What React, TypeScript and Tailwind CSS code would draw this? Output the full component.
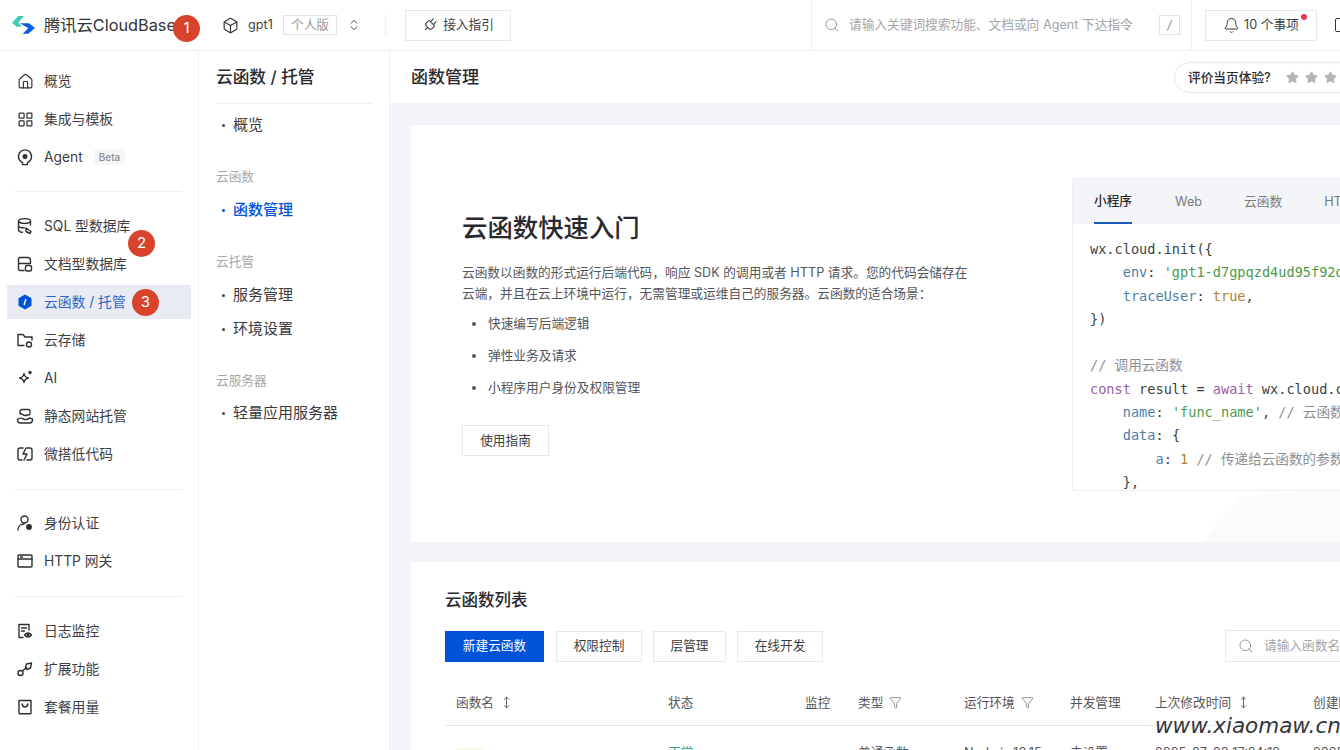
import { Bell, ChevronsUpDown, Box, House, LayoutGrid, Plug, Search, Star, Funnel, MoveVertical } from "lucide-react";
import type { ReactNode } from "react";

const Ico = ({ children }: { children: ReactNode }) => (
  <svg width="18" height="18" viewBox="0 0 18 18" fill="none" stroke="#2f2f33" strokeWidth="1.4" strokeLinecap="round" strokeLinejoin="round">
    {children}
  </svg>
);

const icons: Record<string, ReactNode> = {
  home: <House size={17} strokeWidth={1.6} color="#2f2f33" />,
  grid: <LayoutGrid size={17} strokeWidth={1.7} color="#2f2f33" />,
  agent: (
    <Ico>
      <path d="M6.500 14.600a6.600 6.600 0 1 1 5 0" />
      <path d="M6.500 14.600v2h5v-2" />
      <circle cx="9" cy="8.500" r="1.800" fill="#2f2f33" />
    </Ico>
  ),
  sql: (
    <Ico>
      <ellipse cx="8.500" cy="4" rx="6" ry="2.400" />
      <path d="M2.500 4v9c0 1.200 1.800 2.100 4 2.300M14.500 4v4M2.500 8.500c0 1.300 2.400 2.400 6 2.400" />
      <path d="M10 11l5 3.500-1 2-4-2z" />
    </Ico>
  ),
  doc: (
    <Ico>
      <path d="M8 15.500H4.500a2 2 0 0 1-2-2v-9a2 2 0 0 1 2-2h7a3 3 0 0 1 3 3V8M2.500 8.500h12" />
      <rect x="9.500" y="10.500" width="6" height="5.500" rx="1.500" />
    </Ico>
  ),
  fn: (
    <svg width="18" height="18" viewBox="0 0 18 18">
      <path d="M9 1.500l6.500 3.700v7.600L9 16.500l-6.500-3.700V5.200z" fill="#0052d9" />
      <path d="M9.800 6.500L8.200 11.500" stroke="#fff" strokeWidth="1.400" strokeLinecap="round" />
    </svg>
  ),
  folder: (
    <Ico>
      <path d="M8 14.500H2V3.500h5l2 2.500h7v3" />
      <circle cx="13" cy="13.500" r="2.500" />
    </Ico>
  ),
  ai: (
    <Ico>
      <path d="M8 4.500c.5 3 1.500 4 4.500 4.500-3 .5-4 1.500-4.500 4.500-.5-3-1.500-4-4.500-4.500 3-.5 4-1.500 4.500-4.500z" />
      <circle cx="14" cy="3.500" r="1" fill="#2f2f33" />
    </Ico>
  ),
  web: (
    <Ico>
      <path d="M4 7V4.500a2 2 0 0 1 2-2h6a2 2 0 0 1 2 2V6M4 7c2-1 3 1.500 5 1.500s3-1 5-1" />
      <path d="M1.500 12.500c2-2.500 4-1.500 6-.5s4 1 6-1l3 1v1a3 3 0 0 1-3 3H4.500a3 3 0 0 1-3-3.500z" />
    </Ico>
  ),
  low: (
    <Ico>
      <path d="M7 3H4a2 2 0 0 0-2 2v8a2 2 0 0 0 2 2h2M11 3h3a2 2 0 0 1 2 2v8a2 2 0 0 1-2 2h-3" />
      <path d="M10 3L7 9h4l-3 6" />
    </Ico>
  ),
  user: (
    <Ico>
      <circle cx="8.500" cy="5.500" r="3.500" />
      <path d="M2 16c0-3.500 2.500-6 6-6" />
      <circle cx="13" cy="13" r="2.200" fill="#2f2f33" />
    </Ico>
  ),
  http: (
    <Ico>
      <rect x="2" y="3" width="14" height="12" rx="1" />
      <path d="M2 7h14M4.500 5h2" />
    </Ico>
  ),
  log: (
    <Ico>
      <path d="M7 15.500H3V2.500h10V8M5.500 6h5M5.500 9h3" />
      <path d="M8.500 13c2-2.600 5-2.600 7 0-2 2.600-5 2.600-7 0z" />
      <circle cx="12" cy="13" r=".8" fill="#2f2f33" />
    </Ico>
  ),
  ext: (
    <Ico>
      <circle cx="4.500" cy="13" r="2.500" />
      <path d="M6.500 11l4-3.500" />
      <path d="M9.500 7.500l1-3.500 5-1-1 5-3.500 1.500z" />
    </Ico>
  ),
  plan: (
    <Ico>
      <path d="M3 2.500h12V15a.8.8 0 0 1-.8.800H3.800A.8.800 0 0 1 3 15z" />
      <path d="M6 6c.5 2 1.500 3 3 3s2.500-1 3-3" />
    </Ico>
  ),
};

type NavItem = { icon: string; label: string; beta?: boolean; active?: boolean };

const navGroups: NavItem[][] = [
  [
    { icon: "home", label: "概览" },
    { icon: "grid", label: "集成与模板" },
    { icon: "agent", label: "Agent", beta: true },
  ],
  [
    { icon: "sql", label: "SQL 型数据库" },
    { icon: "doc", label: "文档型数据库" },
    { icon: "fn", label: "云函数 / 托管", active: true },
    { icon: "folder", label: "云存储" },
    { icon: "ai", label: "AI" },
    { icon: "web", label: "静态网站托管" },
    { icon: "low", label: "微搭低代码" },
  ],
  [
    { icon: "user", label: "身份认证" },
    { icon: "http", label: "HTTP 网关" },
  ],
  [
    { icon: "log", label: "日志监控" },
    { icon: "ext", label: "扩展功能" },
    { icon: "plan", label: "套餐用量" },
  ],
];

const Badge = ({ n, className }: { n: number; className: string }) => (
  <div className={`absolute w-[27px] h-[27px] rounded-full bg-[#d8432b] text-white text-[15px] flex items-center justify-center ${className}`}>
    {n}
  </div>
);

const SubItem = ({ label, active }: { label: string; active?: boolean }) => (
  <div className={`flex items-center h-[34px] text-[15px] ${active ? "text-[#0052d9] font-medium" : "text-[#3a3a3e]"}`}>
    <span className={`w-[3px] h-[3px] rounded-full ml-[6px] mr-[8px] ${active ? "bg-[#0052d9]" : "bg-[#444]"}`} />
    {label}
  </div>
);

const SubLabel = ({ label }: { label: string }) => <div className="text-[12.700px] text-[#a5a7ab] h-[20px] leading-[20px]">{label}</div>;

const Outline = ({ children, className }: { children: ReactNode; className: string }) => (
  <button className={`h-[31px] border border-[#e7e8ec] bg-white text-[12.700px] text-[#3e3e42] flex items-center justify-center ${className}`}>
    {children}
  </button>
);

const M = "text-[#4f7fa8]";
const G = "text-[#4c9a4c]";
const O = "text-[#b5802f]";
const C = "text-[#8e9094]";

const codeLines: ReactNode[] = [
  <>wx.cloud.init({"{"}</>,
  <>    <span className={M}>env</span>: <span className={G}>'gpt1-d7gpqzd4ud95f92d'</span>,</>,
  <>    <span className={M}>traceUser</span>: <span className={O}>true</span>,</>,
  <>{"}"})</>,
  <> </>,
  <span className={C}>// 调用云函数</span>,
  <><span className="text-[#9a5fa8]">const</span> result = <span className="text-[#9a5fa8]">await</span> wx.cloud.callFunction({"{"}</>,
  <>    <span className={M}>name</span>: <span className={G}>'func_name'</span>, <span className={C}>// 云函数名称</span></>,
  <>    <span className={M}>data</span>: {"{"}</>,
  <>        <span className={M}>a</span>: <span className={O}>1</span> <span className={C}>// 传递给云函数的参数</span></>,
  <>    {"}"},</>,
];

const FilterIcon = () => <Funnel size={13} strokeWidth={1.3} color="#666" />;
const SortIcon = () => <MoveVertical size={13} strokeWidth={1.8} color="#666" />;

export default function App() {
  return (
    <div className="relative w-[1340px] h-[750px] overflow-hidden bg-white flex flex-col text-[#3a3a3e] [font-family:Inter,'Noto_Sans_CJK_SC',sans-serif]">
      {/* top bar */}
      <header className="h-[51px] shrink-0 flex items-center border-b border-[#eceef1] bg-white">
        <svg width="24" height="18" viewBox="0 0 24 18" className="ml-[12px] shrink-0">
          <path d="M0 6.700L6.300 0H12L6.300 6.700L10 10L5 11z" fill="#3ecbb8" />
          <path d="M8 7.300H17L23 12L16.300 17.700H10.700L16.300 12L12.500 10z" fill="#0b5fe0" />
        </svg>
        <span className="ml-[8px] w-[131px] shrink-0 text-[16.300px] text-[#333] whitespace-nowrap">腾讯云CloudBase</span>
        <Box size={17} strokeWidth={1.6} color="#333" className="ml-[47px] shrink-0" />
        <span className="ml-[9px] w-[26px] shrink-0 text-[12.700px] text-[#444]">gpt1</span>
        <span className="ml-[9px] w-[54px] h-[20px] shrink-0 border border-[#dfe1e5] text-[12.700px] text-[#9a9a9e] flex items-center justify-center">个人版</span>
        <ChevronsUpDown size={14} strokeWidth={1.7} color="#444" className="ml-[10px] shrink-0" />
        <div className="w-px h-[20px] bg-[#eceef1] ml-[24px] shrink-0" />
        <Outline className="ml-[19px] w-[106px] gap-[5px] shrink-0">
          <Plug size={16} strokeWidth={1.5} color="#333" className="rotate-45" />
          接入指引
        </Outline>
        <div className="ml-[300px] w-[381px] shrink-0 h-full border-x border-[#eceef1] flex items-center pl-[12px]">
          <Search size={16} strokeWidth={1.3} color="#888" />
          <span className="ml-[9px] w-[283px] text-[12.700px] text-[#a3a5a9] whitespace-nowrap">请输入关键词搜索功能、文档或向 Agent 下达指令</span>
          <span className="ml-[27px] w-[21px] h-[20px] border border-[#dfe1e5] text-[12px] italic text-[#888] flex items-center justify-center">/</span>
        </div>
        <Outline className="ml-[13px] w-[112px] gap-[4px] relative shrink-0">
          <Bell size={17} strokeWidth={1.4} color="#333" />
          10 个事项
          <span className="absolute right-[9px] top-[3px] w-[6px] h-[6px] rounded-full bg-[#e8384f]" />
        </Outline>
        <div className="ml-[18px] w-[10px] h-[14px] border border-[#333] rounded-[2px] shrink-0" />
      </header>

      <div className="flex-1 flex min-h-0">
        {/* main nav */}
        <aside className="w-[199px] shrink-0 border-r border-[#eff0f3] pt-[11px] pl-[7px] pr-[7px]">
          {navGroups.map((group, i) => (
            <div key={i}>
              {i === 1 && <div className="h-px bg-[#eeeff2] ml-[8px] mr-[9px] my-[15px]" />}
              {i === 2 && <div className="h-px bg-[#eeeff2] ml-[8px] mr-[9px] mt-[16px] mb-[14px]" />}
              {i === 3 && <div className="h-px bg-[#eeeff2] ml-[8px] mr-[9px] mt-[16px] mb-[15px]" />}
              {group.map((item) => (
                <div
                  key={item.label}
                  className={
                    item.active
                      ? "h-[34px] my-[2px] flex items-center pl-[9px] text-[13.800px] bg-[#e9ebf2] text-[#2a65c9]"
                      : "h-[38px] flex items-center pl-[9px] text-[13.800px] text-[#3e3e42]"
                  }
                >
                  <span className="w-[18px] flex justify-center">{icons[item.icon]}</span>
                  <span className="ml-[10px]">{item.label}</span>
                  {item.beta && <span className="ml-[11px] px-[5px] h-[16px] rounded-[3px] bg-[#f5f6f8] text-[10px] text-[#8a8c90] flex items-center font-medium">Beta</span>}
                </div>
              ))}
            </div>
          ))}
        </aside>

        {/* sub nav */}
        <aside className="w-[191px] shrink-0 px-[17px] border-r border-[#eff0f3]">
          <div className="h-[53px] pt-[1px] flex items-center border-b border-[#eeeff2] text-[16.700px] font-medium text-[#2a2a2e]">云函数 / 托管</div>
          <div className="mt-[4px]"><SubItem label="概览" /></div>
          <div className="mt-[25px]"><SubLabel label="云函数" /></div>
          <div className="mt-[6px]"><SubItem label="函数管理" active /></div>
          <div className="mt-[25px]"><SubLabel label="云托管" /></div>
          <div className="mt-[6px]"><SubItem label="服务管理" /><SubItem label="环境设置" /></div>
          <div className="mt-[25px]"><SubLabel label="云服务器" /></div>
          <div className="mt-[5px]"><SubItem label="轻量应用服务器" /></div>
        </aside>

        {/* content */}
        <main className="flex-1 min-w-0 flex flex-col bg-[#f3f4f8]">
          <div className="h-[52px] pt-[1px] shrink-0 bg-white flex items-center pl-[21px] text-[17px] font-medium text-[#2a2a2e]">
            函数管理
            <div className="ml-auto w-[190px] mr-[-24px] h-[31px] rounded-full border border-[#e9eaee] flex items-center pl-[13px] text-[12.700px] font-medium">
              评价当页体验?
              <span className="ml-[15px] flex gap-[6px]">
                {[0, 1, 2, 3].map((s) => <Star key={s} size={13} fill="#b3b5b9" color="#b3b5b9" />)}
              </span>
            </div>
          </div>
          <div className="pl-[21px] pt-[22px] overflow-hidden flex-1">
            {/* quick start */}
            <section className="relative w-[950px] h-[417px] bg-white flex pl-[51px] overflow-hidden">
              <svg width="150" height="60" viewBox="0 0 150 60" className="absolute left-[790px] top-[362px]">
                <path d="M0 55L40 10L150 0V60H0z" fill="#f9fcfb" />
              </svg>
              <div className="relative w-[610px] shrink-0 pt-[85px]">
                <h1 className="text-[25.400px] leading-[36px] font-medium text-[#2a2a2e]">云函数快速入门</h1>
                <p className="mt-[16px] w-[515px] text-[12.700px] leading-[21px] text-[#55565a]">
                  云函数以函数的形式运行后端代码，响应 SDK 的调用或者 HTTP 请求。您的代码会储存在云端，并且在云上环境中运行，无需管理或运维自己的服务器。云函数的适合场景：
                </p>
                <ul className="mt-[4px] text-[12.700px] text-[#55565a]">
                  {["快速编写后端逻辑", "弹性业务及请求", "小程序用户身份及权限管理"].map((t) => (
                    <li key={t} className="h-[32px] flex items-center pl-[10px]">
                      <span className="w-[4px] h-[4px] rounded-full bg-[#555] mr-[12px]" />
                      {t}
                    </li>
                  ))}
                </ul>
                <Outline className="mt-[21px] w-[87px]">使用指南</Outline>
              </div>
              <div className="relative mt-[53px] h-[313px] w-[400px] shrink-0 border border-[#eceef1] overflow-hidden bg-white">
                <div className="h-[45px] bg-[#f4f5f8] flex items-center pl-[21px] text-[12.700px] text-[#77797d]">
                  <span className="h-full flex items-center font-medium text-[#2a2a2e] border-b-2 border-[#1d5bb8]">小程序</span>
                  <span className="ml-[43px]">Web</span>
                  <span className="ml-[42px]">云函数</span>
                  <span className="ml-[42px]">HTTP</span>
                </div>
                <pre className="mt-[14px] pl-[17px] text-[13.600px] leading-[23.300px] text-[#3d3f43] [font-family:'DejaVu_Sans_Mono','Noto_Sans_CJK_SC',monospace]">
                  {codeLines.map((l, i) => <div key={i}>{l}</div>)}
                </pre>
              </div>
            </section>

            {/* function list */}
            <section className="mt-[20px] w-[950px] h-[300px] bg-white pl-[34px] pt-[25px]">
              <h2 className="text-[16.500px] leading-[26px] font-medium text-[#2a2a2e]">云函数列表</h2>
              <div className="mt-[17px] flex items-center">
                <button className="h-[31px] w-[99px] bg-[#0052d9] text-white text-[12.700px]">新建云函数</button>
                <Outline className="ml-[12px] w-[86px]">权限控制</Outline>
                <Outline className="ml-[11px] w-[73px]">层管理</Outline>
                <Outline className="ml-[11px] w-[86px]">在线开发</Outline>
                <div className="ml-[402px] w-[130px] h-[32px] border border-[#e7e8ec] flex items-center pl-[12px] shrink-0">
                  <Search size={16} strokeWidth={1.3} color="#888" />
                  <span className="ml-[10px] text-[12.700px] text-[#a3a5a9] whitespace-nowrap">请输入函数名</span>
                </div>
              </div>
              <div className="mt-[24px] w-[905px] h-[40px] pl-[11px] pb-[6px] border-b border-[#e7e8ec] grid grid-cols-[212px_137px_53px_106px_106px_85px_158px_1fr] items-center text-[12.700px] text-[#55565a]">
                <span className="flex items-center gap-[6px]">函数名 <SortIcon /></span>
                <span>状态</span>
                <span>监控</span>
                <span className="flex items-center gap-[6px]">类型 <FilterIcon /></span>
                <span className="flex items-center gap-[6px]">运行环境 <FilterIcon /></span>
                <span>并发管理</span>
                <span className="flex items-center gap-[6px]">上次修改时间 <SortIcon /></span>
                <span className="whitespace-nowrap">创建时间</span>
              </div>
              <div className="mt-[17px] w-[905px] pl-[11px] grid grid-cols-[212px_137px_53px_106px_106px_85px_158px_1fr] items-center text-[12.700px] text-[#55565a] whitespace-nowrap">
                <span className="flex items-center gap-[18px]">
                  <span className="w-[28px] h-[10px] bg-[#fbf9e8]" />
                  <span className="text-[#2a65c9]">a</span>
                </span>
                <span className="text-[#2ba471]">正常</span>
                <span />
                <span>普通函数</span>
                <span>Node.js 10.15</span>
                <span>未设置</span>
                <span>2025-07-08 17:24:19</span>
                <span>2025-07-08</span>
              </div>
            </section>
          </div>
        </main>
      </div>

      {/* annotations over the screenshot */}
      <Badge n={1} className="left-[173px] top-[15px]" />
      <Badge n={2} className="left-[128px] top-[230px]" />
      <Badge n={3} className="left-[132px] top-[289px]" />
      <div className="absolute left-[1155px] top-[710px] text-[21.500px] italic text-[#33363a] [font-family:'DejaVu_Sans',sans-serif] whitespace-nowrap">www.xiaomaw.cn</div>
    </div>
  );
}
